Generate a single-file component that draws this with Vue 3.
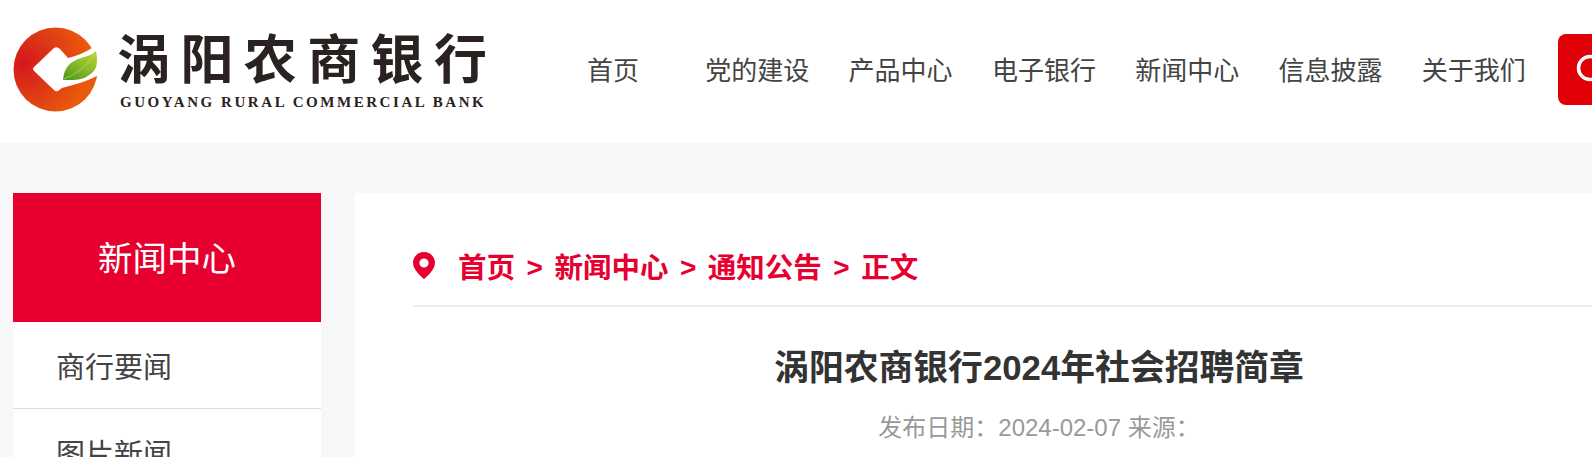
<script setup>
const navItems = ['首页', '党的建设', '产品中心', '电子银行', '新闻中心', '信息披露', '关于我们']
const sideItems = ['商行要闻', '图片新闻', '通知公告']
const crumbs = ['首页', '新闻中心', '通知公告', '正文']
</script>

<template>
  <div class="viewport">
    <div class="page">
      <header class="top">
        <div class="logo">
          <svg class="logo-mark" width="85" height="85" viewBox="0 0 85 85">
            <defs>
              <radialGradient id="ring" cx="0.12" cy="0.42" r="0.78">
                <stop offset="0" stop-color="#d3171f" />
                <stop offset="0.5" stop-color="#dd3a14" />
                <stop offset="1" stop-color="#ea5a0c" />
              </radialGradient>
              <linearGradient id="leaf" x1="0.15" y1="1" x2="0.8" y2="0">
                <stop offset="0" stop-color="#4f9a1e" />
                <stop offset="0.55" stop-color="#8dbd2a" />
                <stop offset="1" stop-color="#b5d235" />
              </linearGradient>
            </defs>
            <circle cx="42.5" cy="42.5" r="42" fill="url(#ring)" />
            <path d="M21 40 L41 21 Q44 19 47 22 L55 31 Q68 28 79 21 L86 17 L86 48 Q76 53 67 56 L49 61 L45 64 Q43 65 41 63 L21 44 Q19 42 21 40 Z" fill="#fff" />
            <path d="M50 53 C51 40 58 34 68 31 C74 29 79 28 83 24 C85 34 84 41 80 45 C75 50 68 53 60 53 Z" fill="url(#leaf)" />
            <path d="M51 52 Q68 46 81 28" fill="none" stroke="#cfe27a" stroke-width="0.6" />
          </svg>
          <div class="logo-words">
            <div class="logo-cn">涡阳农商银行</div>
            <div class="logo-en">GUOYANG RURAL COMMERCIAL BANK</div>
          </div>
        </div>
        <nav class="nav">
          <a v-for="item in navItems" :key="item" class="nav-item">{{ item }}</a>
        </nav>
        <div class="search-btn">
          <svg width="71" height="71" viewBox="0 0 71 71">
            <circle cx="32" cy="34" r="11.5" fill="none" stroke="#fff" stroke-width="3.5" />
            <path d="M41 43 L50 52" stroke="#fff" stroke-width="3.5" stroke-linecap="round" />
          </svg>
        </div>
      </header>

      <div class="body">
        <aside class="side">
          <div class="side-title">新闻中心</div>
          <a v-for="item in sideItems" :key="item" class="side-item">{{ item }}</a>
        </aside>

        <main class="main">
          <div class="crumbs">
            <svg class="pin" width="22" height="27" viewBox="0 0 22 27">
              <path fill-rule="evenodd" d="M11 0 C17.2 0 22 4.8 22 10.8 C22 17 15.5 23.5 11 27 C6.5 23.5 0 17 0 10.8 C0 4.8 4.8 0 11 0 Z M11 6.4 A4.6 4.6 0 1 0 11 15.6 A4.6 4.6 0 1 0 11 6.4 Z" fill="#e7002f" />
            </svg>
            <template v-for="(c, i) in crumbs" :key="c">
              <span v-if="i > 0" class="sep">&gt;</span>
              <a class="crumb">{{ c }}</a>
            </template>
          </div>
          <h1 class="title">涡阳农商银行2024年社会招聘简章</h1>
          <p class="meta">发布日期：2024-02-07 来源：</p>
        </main>
      </div>
    </div>
  </div>
</template>

<style>
html, body {
  margin: 0;
  overflow: hidden;
  background: #f7f7f7;
}
</style>

<style scoped>
.viewport {
  width: 1592px;
  height: 457px;
  overflow: hidden;
}

.page {
  width: 1736px;
  font-family: "Liberation Sans", "Noto Sans CJK SC", sans-serif;
  color: #333;
}

.top {
  display: flex;
  align-items: center;
  box-sizing: border-box;
  height: 143px;
  padding: 0 0 4px 13px;
  background: #fff;
}

.logo {
  display: flex;
  align-items: center;
  gap: 22px;
  width: 574px;
}

.logo-words {
  margin-bottom: 3px;
  color: #2a2220;
}

.logo-cn {
  margin-left: -3px;
  font-family: "Noto Sans CJK SC", sans-serif;
  font-size: 53px;
  font-weight: 700;
  line-height: 60px;
  letter-spacing: 10.4px;
  white-space: nowrap;
}

.logo-en {
  margin-top: 8px;
  font-family: "Liberation Serif", serif;
  font-size: 15px;
  font-weight: 700;
  line-height: 16px;
  letter-spacing: 2.55px;
  white-space: nowrap;
}

.nav {
  display: flex;
  gap: 39.3px;
  width: 971px;
  margin-bottom: 2px;
}

.nav-item {
  min-width: 79px;
  font-family: "Noto Sans CJK SC", sans-serif;
  font-size: 26px;
  line-height: 69px;
  color: #444;
  white-space: nowrap;
}

.search-btn {
  flex: none;
  width: 71px;
  height: 71px;
  background: #e10008;
  border-radius: 8px;
}

.search-btn svg {
  display: block;
}

.body {
  display: flex;
  gap: 34px;
  padding: 50px 13px 0;
}

.side {
  flex: none;
  width: 308px;
  background: #fff;
}

.side-title {
  height: 129px;
  font-family: "Noto Sans CJK SC", sans-serif;
  font-size: 34.5px;
  line-height: 127px;
  text-align: center;
  color: #fff;
  background: #e7002f;
}

.side-item {
  display: block;
  height: 86px;
  padding-left: 43px;
  font-family: "Noto Sans CJK SC", sans-serif;
  font-size: 29px;
  line-height: 86px;
  color: #444;
  border-bottom: 1px solid #ddd;
}

.main {
  flex: 1;
  padding: 0 58px;
  background: #fff;
}

.crumbs {
  display: flex;
  align-items: center;
  height: 114px;
  padding-top: 32px;
  box-sizing: border-box;
  border-bottom: 2px solid #eee;
  color: #e7002f;
  font-size: 28.5px;
}

.pin {
  flex: none;
  margin-right: 23px;
}

.crumb {
  font-family: "Noto Sans CJK SC", sans-serif;
  font-weight: 700;
}

.sep {
  margin: 6px 11.5px 0;
  font-size: 28px;
  font-weight: 700;
}

.title {
  margin: 38px 0 0;
  font-size: 34.8px;
  font-weight: 700;
  line-height: 46px;
  text-align: center;
  color: #333;
}

.meta {
  margin: 19px 0 0;
  font-size: 24px;
  line-height: 36px;
  text-align: center;
  color: #999;
}
</style>
